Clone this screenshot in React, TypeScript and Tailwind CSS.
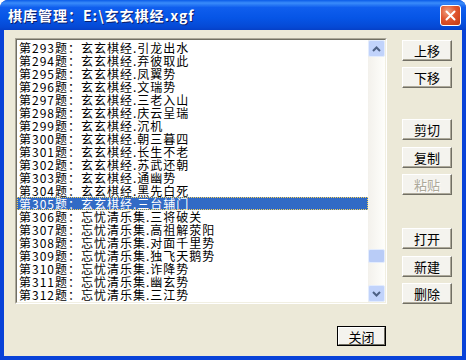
// 棋库管理 대화상자 (XP 스타일)
const items: string[] = [
  '第293题：玄玄棋经.引龙出水',
  '第294题：玄玄棋经.弃彼取此',
  '第295题：玄玄棋经.凤翼势',
  '第296题：玄玄棋经.文瑞势',
  '第297题：玄玄棋经.三老入山',
  '第298题：玄玄棋经.庆云呈瑞',
  '第299题：玄玄棋经.沉机',
  '第300题：玄玄棋经.朝三暮四',
  '第301题：玄玄棋经.长生不老',
  '第302题：玄玄棋经.苏武还朝',
  '第303题：玄玄棋经.通幽势',
  '第304题：玄玄棋经.黑先白死',
  '第305题：玄玄棋经.三台辅门',
  '第306题：忘忧清乐集.三将破关',
  '第307题：忘忧清乐集.高祖解荥阳',
  '第308题：忘忧清乐集.对面千里势',
  '第309题：忘忧清乐集.独飞天鹅势',
  '第310题：忘忧清乐集.诈降势',
  '第311题：忘忧清乐集.幽玄势',
  '第312题：忘忧清乐集.三江势',
];

const font = { fontFamily: '"Noto Sans CJK SC", "Liberation Sans", sans-serif' };

function Btn({ label, disabled, mt }: { label: string; disabled?: boolean; mt: string }) {
  return (
    <div
      className={`${mt} w-[50px] h-[21px] flex items-center justify-center bg-[#F4F3EE] border border-t-white border-l-white border-r-[#716F64] border-b-[#716F64] shadow-[inset_-1px_-1px_0_#ACA899] text-[13px] leading-none ${
        disabled ? 'text-[#ACA899] [text-shadow:1px_1px_0_#fff]' : 'text-black'
      }`}
    >
      {label}
    </div>
  );
}

function Chevron({ up }: { up?: boolean }) {
  return (
    <svg width="9" height="6" viewBox="0 0 9 6">
      <path
        d={up ? 'M1 5 L4.5 1.5 L8 5' : 'M1 1 L4.5 4.5 L8 1'}
        fill="none"
        stroke="#4D6185"
        strokeWidth="2"
      />
    </svg>
  );
}

export default function App() {
  return (
    <div className="w-[466px] h-[360px] bg-[#0842D8] rounded-t-[8px] flex flex-col overflow-hidden" style={font}>
      {/* 타이틀바 */}
      <div className="h-[30px] flex items-center justify-between pl-[8px] pr-[5px] bg-[linear-gradient(to_bottom,#0A5BE8_0%,#3A8CFA_10%,#0F5EEE_25%,#0655E6_60%,#0549D5_90%,#0540C8_100%)]">
        <span className="text-white text-[14px] font-bold tracking-[1px] [text-shadow:1px_1px_0_#0A1E6B]">
          棋库管理：E:\玄玄棋经.xgf
        </span>
        <div className="w-[21px] h-[21px] rounded-[3px] border border-white bg-[radial-gradient(circle_at_35%_30%,#F0A080_0%,#E0552E_45%,#C33A12_100%)] flex items-center justify-center">
          <svg width="11" height="11" viewBox="0 0 11 11">
            <path d="M1.5 1.5 L9.5 9.5 M9.5 1.5 L1.5 9.5" stroke="white" strokeWidth="2" strokeLinecap="round" />
          </svg>
        </div>
      </div>

      {/* 클라이언트 영역 */}
      <div className="flex-1 mx-[4px] mb-[4px] bg-[#ECE9D8] flex flex-col pl-[11px] pt-[8px]">
        <div className="flex">
          {/* 리스트박스 */}
          <div className="w-[372px] h-[266px] border border-t-[#ACA899] border-l-[#ACA899] border-r-white border-b-white">
            <div className="w-full h-full border border-t-[#716F64] border-l-[#716F64] border-r-[#F1EFE2] border-b-[#F1EFE2] bg-white flex">
              <div className="flex-1 pt-[1px] overflow-hidden">
                {items.map((t, i) => (
                  <div
                    key={i}
                    className={`h-[13px] leading-[13px] text-[12px] tracking-[1px] pl-[2px] whitespace-nowrap ${
                      i === 12
                        ? 'bg-[#316AC5] text-white outline outline-1 outline-dotted outline-[#F5D25A] -outline-offset-1'
                        : 'text-black'
                    }`}
                  >
                    {t}
                  </div>
                ))}
              </div>
              {/* 스크롤바 */}
              <div className="w-[17px] h-full bg-[linear-gradient(to_right,#F3F1EC,#FEFEFB)] flex flex-col">
                <div className="h-[17px] rounded-[2px] border border-[#E3ECFD] bg-[#C1D3FB] flex items-center justify-center">
                  <Chevron up />
                </div>
                <div className="flex-1 flex flex-col">
                  <div className="h-[192px]" />
                  <div className="h-[14px] rounded-[2px] border border-[#E3ECFD] bg-[#B9CCF7]" />
                </div>
                <div className="h-[17px] rounded-[2px] border border-[#E3ECFD] bg-[#C1D3FB] flex items-center justify-center">
                  <Chevron />
                </div>
              </div>
            </div>
          </div>

          {/* 버튼 컬럼 */}
          <div className="ml-[15px] flex flex-col">
            <Btn label="上移" mt="mt-[2px]" />
            <Btn label="下移" mt="mt-[6px]" />
            <Btn label="剪切" mt="mt-[31px]" />
            <Btn label="复制" mt="mt-[7px]" />
            <Btn label="粘贴" mt="mt-[6px]" disabled />
            <Btn label="打开" mt="mt-[33px]" />
            <Btn label="新建" mt="mt-[7px]" />
            <Btn label="删除" mt="mt-[6px]" />
          </div>
        </div>

        {/* 닫기 */}
        <div className="flex pl-[322px] mt-[22px]">
          <div className="w-[49px] h-[20px] border border-black">
            <div className="w-full h-full flex items-center justify-center bg-[#F4F3EE] border border-t-white border-l-white border-r-[#716F64] border-b-[#716F64] text-[13px] leading-none text-black">
              关闭
            </div>
          </div>
        </div>
      </div>
    </div>
  );
}
